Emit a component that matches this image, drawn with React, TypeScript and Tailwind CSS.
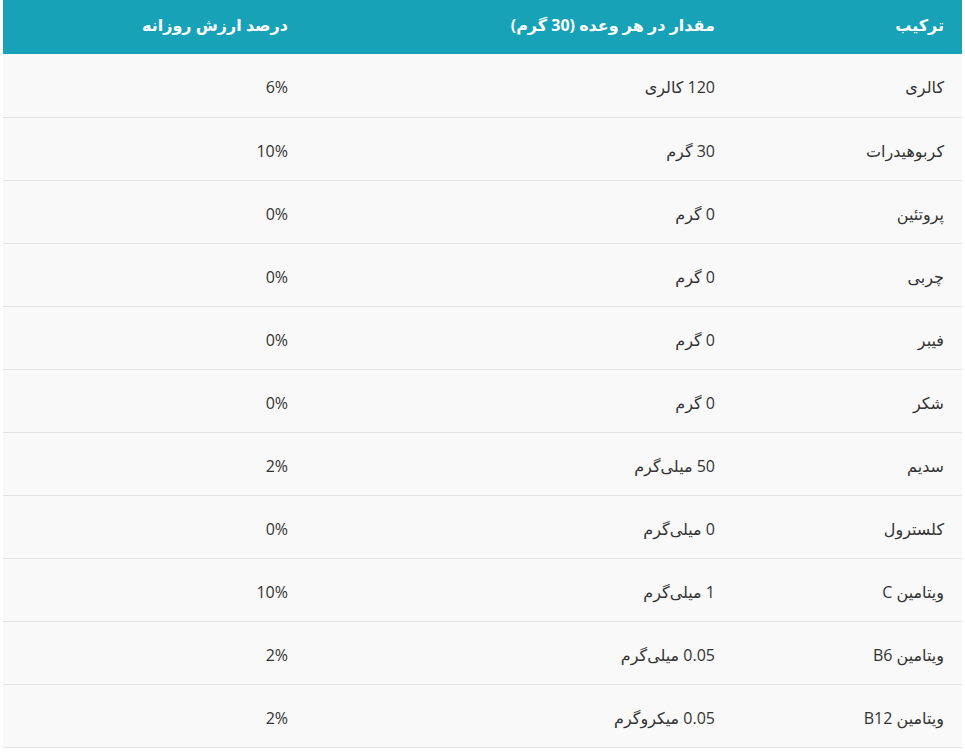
const rows: [string, string, string][] = [
  ["کالری", "120 کالری", "6%"],
  ["کربوهیدرات", "30 گرم", "10%"],
  ["پروتئین", "0 گرم", "0%"],
  ["چربی", "0 گرم", "0%"],
  ["فیبر", "0 گرم", "0%"],
  ["شکر", "0 گرم", "0%"],
  ["سدیم", "50 میلی‌گرم", "2%"],
  ["کلسترول", "0 میلی‌گرم", "0%"],
  ["ویتامین C", "1 میلی‌گرم", "10%"],
  ["ویتامین B6", "0.05 میلی‌گرم", "2%"],
  ["ویتامین B12", "0.05 میکروگرم", "2%"],
];

export default function App() {
  return (
    <div className="min-h-screen bg-white px-[3px]" style={{ fontFamily: '"Open Sans", "DejaVu Sans", sans-serif' }}>
      <table dir="rtl" className="w-full border-collapse text-[16px] text-[#333333]">
        <thead>
          <tr className="h-[54px] bg-[#17a2b8] text-white">
            <th className="w-[229px] px-[18px] pb-[4px] text-right font-bold">ترکیب</th>
            <th className="w-[427px] px-[18px] pb-[4px] text-right font-bold">مقدار در هر وعده (30 گرم)</th>
            <th className="px-[18px] pb-[4px] text-right font-bold">درصد ارزش روزانه</th>
          </tr>
        </thead>
        <tbody>
          {rows.map(([name, amount, pct]) => (
            <tr key={name} className="h-[63px] border-b border-[#e2e2e2] bg-[#f9f9f9]">
              <td className="px-[18px] pt-[4px] text-right">{name}</td>
              <td className="px-[18px] pt-[4px] text-right">{amount}</td>
              <td className="px-[18px] pt-[4px] text-right">{pct}</td>
            </tr>
          ))}
        </tbody>
      </table>
    </div>
  );
}
